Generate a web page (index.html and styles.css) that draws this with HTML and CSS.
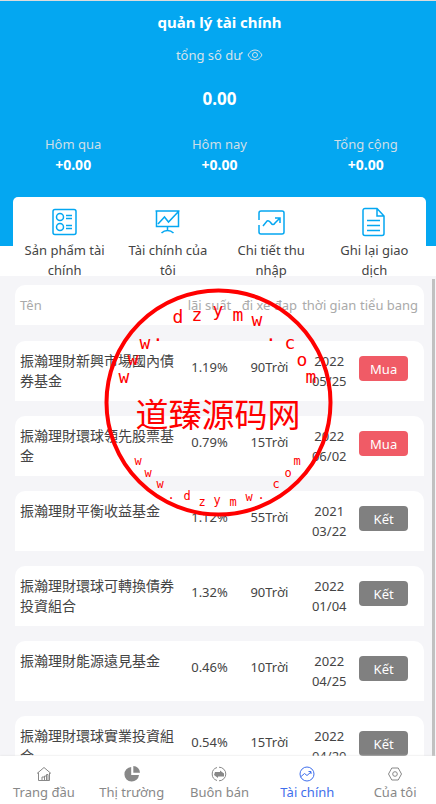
FILE: index.html
```html
<!DOCTYPE html>
<html lang="vi">
<head>
    <meta charset="UTF-8">
    <meta name="viewport" content="width=device-width, initial-scale=1.0">
    <title>quản lý tài chính</title>
    <link rel="stylesheet" href="styles.css">
</head>
<body>
    <header class="header">
        <h1 class="title">quản lý tài chính</h1>
        <div class="total">
            <span>tổng số dư</span>
            <svg class="eye" viewBox="0 0 16 14"><path d="M1 7C3 3.500 5.200 2 8 2s5 1.500 7 5c-2 3.500-4.200 5-7 5S3 10.500 1 7z"/><circle cx="8" cy="7" r="2.500"/></svg>
        </div>
        <div class="balance">0.00</div>
        <div class="stats">
            <div class="stat"><span>Hôm qua</span><b>+0.00</b></div>
            <div class="stat"><span>Hôm nay</span><b>+0.00</b></div>
            <div class="stat"><span>Tổng cộng</span><b>+0.00</b></div>
        </div>
    </header>

    <nav class="menu">
        <a class="menu-item" href="#">
            <svg viewBox="0 0 30 30"><rect x="3" y="2.500" width="23" height="25" rx="2"/><circle cx="10" cy="10" r="3.500"/><circle cx="10" cy="20" r="3.500"/><path d="M16 8.500h6M16 11.500h6M16 18.500h6M16 21.500h6"/></svg>
            Sản phẩm tài chính
        </a>
        <a class="menu-item" href="#">
            <svg viewBox="0 0 30 30"><path d="M2.500 4h24M3.500 4v15.500h22V4M5 17l6.500-7 4 5L25 5M14.500 20v4M8.500 26c2-2 4-2.500 6-2.500s4 .5 6 2.500"/></svg>
            Tài chính của tôi
        </a>
        <a class="menu-item" href="#">
            <svg viewBox="0 0 30 30"><path d="M3 13V6a2 2 0 0 1 2-2h21a2 2 0 0 1 2 2v19a2 2 0 0 1-2 2H5a2 2 0 0 1-2-2v-7M7 19l4-5q2-1 4 2t4 0l5-5M19 11h5v5"/></svg>
            Chi tiết thu nhập
        </a>
        <a class="menu-item" href="#">
            <svg viewBox="0 0 30 30"><path d="M18 1.500H6a2 2 0 0 0-2 2v23a2 2 0 0 0 2 2h17a2 2 0 0 0 2-2V9zM18 1.500V9h7M8 13.500h13M8 18.500h13M8 23.500h13"/></svg>
            Ghi lại giao dịch
        </a>
    </nav>

    <main class="list">
        <table class="funds">
            <thead>
                <tr><th>Tên</th><th>lãi suất</th><th>đi xe đạp</th><th>thời gian</th><th>tiểu bang</th></tr>
            </thead>
            <tbody>
                <tr><td>振瀚理財新興市場國內債券基金</td><td>1.19%</td><td>90Trời</td><td>2022 05/25</td><td><button class="btn buy">Mua</button></td></tr>
                <tr><td>振瀚理財環球領先股票基金</td><td>0.79%</td><td>15Trời</td><td>2022 06/02</td><td><button class="btn buy">Mua</button></td></tr>
                <tr><td>振瀚理財平衡收益基金</td><td>1.12%</td><td>55Trời</td><td>2021 03/22</td><td><button class="btn">Kết</button></td></tr>
                <tr><td>振瀚理財環球可轉換債券投資組合</td><td>1.32%</td><td>90Trời</td><td>2022 01/04</td><td><button class="btn">Kết</button></td></tr>
                <tr><td>振瀚理財能源遠見基金</td><td>0.46%</td><td>10Trời</td><td>2022 04/25</td><td><button class="btn">Kết</button></td></tr>
                <tr><td>振瀚理財環球實業投資組合</td><td>0.54%</td><td>15Trời</td><td>2022 04/20</td><td><button class="btn">Kết</button></td></tr>
            </tbody>
        </table>
        <div class="scrollbar"></div>
    </main>

    <nav class="tabbar">
        <a class="tab" href="#">
            <svg viewBox="0 0 16 16"><path d="M1 7.500L8 1.500l7 6M2.500 6.500v8h11V7M6 14v-3h2.500v3M8.500 14V10h2M10.500 14V8.500h1.500V14"/></svg>
            Trang đầu
        </a>
        <a class="tab" href="#">
            <svg viewBox="0 0 16 16"><path class="fill" d="M7.200 1A7.300 7.300 0 1 0 15 9H7.200z"/><path class="fill" d="M9.300 0v6.700H16A6.800 6.800 0 0 0 9.300 0z"/></svg>
            Thị trường
        </a>
        <a class="tab" href="#">
            <svg viewBox="0 0 16 16"><path d="M6 1.500A6.800 6.800 0 0 0 6 14.500M8 1.200A6.800 6.800 0 0 1 8 14.800"/><path class="fill" d="M4 6h5V4.500l4 3v3H7V12L3 9z"/></svg>
            Buôn bán
        </a>
        <a class="tab active" href="#">
            <svg viewBox="0 0 16 16"><circle cx="8" cy="8" r="7"/><path d="M1.500 11l4-3.500L8 9.500 12 6M9.500 5.500H12V8"/></svg>
            Tài chính
        </a>
        <a class="tab" href="#">
            <svg viewBox="0 0 16 16"><path d="M4.800 2h6.400l3.300 6-3.300 6H4.800L1.500 8z"/><circle cx="8" cy="8" r="2.300"/></svg>
            Của tôi
        </a>
    </nav>

    <svg class="stamp" viewBox="0 0 229 229">
        <circle cx="114.500" cy="114.500" r="112"/>
        <text class="stamp-top" x="20 29 41 54 74 93 114 134 153 167 186 198 207" y="95 77 61 53 35 33 28 33 38 53 61 78 95">www.dzymw.com</text>
        <text class="stamp-name" x="114" y="139">道臻源码网</text>
        <text class="stamp-bottom" x="34 44 56 67 83 98 113 129 145 157 172 184 193" y="177 189 200 211 212 218 216 218 213 211 200 189 177">www.dzymw.com</text>
    </svg>
</body>
</html>
```
FILE: styles.css
```css
* {
    box-sizing: border-box;
}

/* the page runs 3px past the right edge, under the scrollbar */
body {
    display: flex;
    flex-direction: column;
    height: 100vh;
    margin: 0 -3px 0 0;
    overflow: hidden;
    background: #fff;
    color: #444;
    font-family: "Noto Sans", "Noto Sans CJK TC", sans-serif;
    font-size: 13px;
    line-height: 20px;
}

a {
    color: inherit;
    text-decoration: none;
}

svg {
    fill: none;
    stroke: currentColor;
}

/* header */
.header {
    padding: 11px 0 70px;
    border-top: 1px solid #dcdcdc;
    background: #04a7f1;
    color: #fff;
    text-align: center;
}

.title {
    margin: 0;
    font-size: 15px;
    line-height: 20px;
}

.total {
    display: flex;
    justify-content: center;
    align-items: center;
    gap: 5px;
    margin-top: 13px;
    color: #d5e3ea;
}

.eye {
    width: 16px;
    height: 14px;
}

.balance {
    margin-top: 24px;
    font-size: 17px;
    font-weight: bold;
}

.stats {
    display: flex;
    margin-top: 25px;
}

.stat {
    flex: 1;
}

.stat span {
    display: block;
    color: #cfdfe7;
}

.stat b {
    display: block;
    font-size: 14px;
    line-height: 22px;
}

/* menu */
.menu {
    position: relative;
    z-index: 1;
    display: flex;
    margin: -49px 13px 0;
    padding: 10px 0 0;
    border-radius: 5px 5px 0 0;
    background: #fff;
}

.menu-item {
    flex: 1;
    margin-bottom: -4px;
    padding: 0 10px;
    text-align: center;
}

.menu-item svg {
    display: block;
    width: 30px;
    height: 30px;
    margin: 0 auto 3px;
    color: #04a7f1;
    stroke-width: 1.5;
}

/* funds */
.list {
    position: relative;
    flex: 1;
    min-height: 0;
    overflow: hidden;
    padding: 9px 15px 0;
    background: #f5f5f8;
}

.funds,
.funds thead,
.funds tbody {
    display: block;
}

.funds tr {
    display: grid;
    grid-template-columns: 8fr 3fr 3fr 3fr 3fr;
    margin-bottom: 15px;
    padding: 0 5px;
    border-radius: 10px 10px 0 0;
    background: #fff;
}

.funds thead tr {
    margin-bottom: 16px;
}

.funds th {
    padding: 10px 0;
    color: #aaa;
    font-weight: normal;
    white-space: nowrap;
}

.funds td {
    padding: 16px 0 0;
    text-align: center;
}

.funds th:first-child {
    text-align: left;
}

.funds td:first-child {
    padding: 10px 5px 10px 0;
    font-size: 14px;
    text-align: left;
}

.funds td:nth-child(4) {
    padding: 10px 8px;
}

.funds td:last-child {
    padding-top: 15px;
    text-align: left;
}

.btn {
    display: block;
    width: 49px;
    height: 25px;
    padding: 0;
    border: 0;
    border-radius: 4px;
    background: #808080;
    color: #fff;
    font: inherit;
}

.buy {
    background: #f05b66;
}

.scrollbar {
    position: absolute;
    top: 3px;
    right: 4px;
    bottom: 0;
    width: 3px;
    background: #c1c1c1;
}

/* tab bar */
.tabbar {
    display: flex;
    padding: 10px 0 2px;
    background: #fff;
    box-shadow: 0 0 2px #ddd;
    z-index: 1;
}

.tab {
    flex: 1;
    color: #888;
    text-align: center;
}

.tab svg {
    display: block;
    width: 16px;
    height: 16px;
    margin: 0 auto;
}

.tab .fill {
    fill: currentColor;
    stroke: none;
}

.active {
    color: #3f6fec;
}

/* round stamp over the list */
.stamp {
    position: absolute;
    top: 288px;
    left: calc(50% - 114px);
    z-index: 2;
    width: 229px;
    height: 229px;
    stroke: none;
    pointer-events: none;
}

.stamp circle {
    stroke: #f00;
    stroke-width: 4;
}

.stamp text {
    fill: #f00;
    font-family: "DejaVu Sans Mono", monospace;
    text-anchor: middle;
}

.stamp .stamp-top {
    font-size: 18px;
}

.stamp .stamp-bottom {
    font-size: 12px;
}

.stamp .stamp-name {
    font-family: "Noto Sans CJK SC", sans-serif;
    font-size: 33px;
}
```
